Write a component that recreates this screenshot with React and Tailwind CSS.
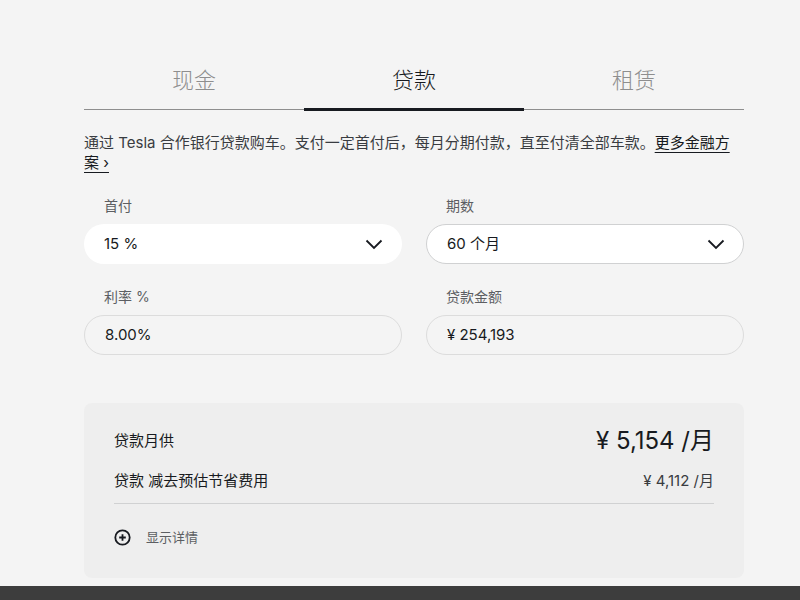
import React from "react";

const font = { fontFamily: "Inter, 'Noto Sans CJK SC', sans-serif" };

function Chevron() {
  return (
    <svg width="18" height="11" viewBox="0 0 18 11" fill="none">
      <path d="M1.5 1.5 L9 9 L16.5 1.5" stroke="#171a20" strokeWidth="1.8" />
    </svg>
  );
}

function PlusCircle() {
  return (
    <svg width="17" height="17" viewBox="0 0 17 17" fill="none">
      <circle cx="8.5" cy="8.5" r="7.2" stroke="#171a20" strokeWidth="1.8" />
      <path d="M8.5 5.2 V11.8 M5.2 8.5 H11.8" stroke="#171a20" strokeWidth="1.8" />
    </svg>
  );
}

export default function App() {
  return (
    <div className="min-h-[600px] bg-[#f4f4f4] flex flex-col" style={font}>
      <div className="ml-[84px] w-[660px] pt-[52px] flex-1">
        <div className="flex border-b border-[#8e8e8e] h-[58px]">
          <div className="w-[220px] flex items-center justify-center text-[22px] font-light text-[#8e8e8e]">现金</div>
          <div className="w-[220px] relative flex items-center justify-center text-[22px] font-light text-[#171a20]">
            贷款
            <div className="absolute left-0 right-0 bottom-[-2px] h-[3px] bg-[#171a20]" />
          </div>
          <div className="w-[220px] flex items-center justify-center text-[22px] font-light text-[#8e8e8e]">租赁</div>
        </div>

        <p className="mt-[23px] text-[15px] leading-[20px] text-[#393c41]">
          通过 Tesla 合作银行贷款购车。支付一定首付后，每月分期付款，直至付清全部车款。
          <span className="text-[#171a20] underline underline-offset-[4px] decoration-[#171a20]">更多金融方案 ›</span>
        </p>

        <div className="grid grid-cols-2 gap-x-[24px] mt-[23px]">
          <div>
            <div className="pl-[20px] text-[14px] text-[#5c5e62] leading-[20px]">首付</div>
            <div className="mt-[8px] h-[40px] rounded-full bg-white flex items-center justify-between pl-[20px] pr-[19px] text-[15px] text-[#171a20]">
              <span>15 %</span>
              <Chevron />
            </div>
          </div>
          <div>
            <div className="pl-[20px] text-[14px] text-[#5c5e62] leading-[20px]">期数</div>
            <div className="mt-[8px] h-[40px] rounded-full bg-white border border-[#d0d1d2] flex items-center justify-between pl-[20px] pr-[18px] text-[15px] text-[#171a20]">
              <span>60 个月</span>
              <Chevron />
            </div>
          </div>
          <div className="mt-[23px]">
            <div className="pl-[20px] text-[14px] text-[#5c5e62] leading-[20px]">利率 %</div>
            <div className="mt-[8px] h-[40px] rounded-full border border-[#dcdcdc] flex items-center pl-[20px] text-[15px] text-[#171a20]">
              8.00%
            </div>
          </div>
          <div className="mt-[23px]">
            <div className="pl-[20px] text-[14px] text-[#5c5e62] leading-[20px]">贷款金额</div>
            <div className="mt-[8px] h-[40px] rounded-full border border-[#dcdcdc] flex items-center pl-[20px] text-[15px] text-[#171a20]">
              ¥ 254,193
            </div>
          </div>
        </div>

        <div className="mt-[48px] mb-[8px] rounded-[8px] bg-[#eeeeee] px-[30px] pt-[23px] pb-[30px]">
          <div className="flex items-center justify-between h-[30px]">
            <span className="text-[15px] text-[#171a20]">贷款月供</span>
            <span className="text-[24px] text-[#171a20]">¥ 5,154 /月</span>
          </div>
          <div className="flex items-center justify-between mt-[14px] h-[22px] text-[15px]">
            <span className="text-[#171a20]">贷款 减去预估节省费用</span>
            <span className="text-[#393c41]">¥ 4,112 /月</span>
          </div>
          <div className="mt-[11px] border-t border-[#d0d1d2]" />
          <div className="flex items-center mt-[24px] gap-[15px]">
            <PlusCircle />
            <span className="text-[13px] text-[#5c5e62]">显示详情</span>
          </div>
        </div>
      </div>
      <div className="h-[15px] bg-[#3d3d3d]" />
    </div>
  );
}
